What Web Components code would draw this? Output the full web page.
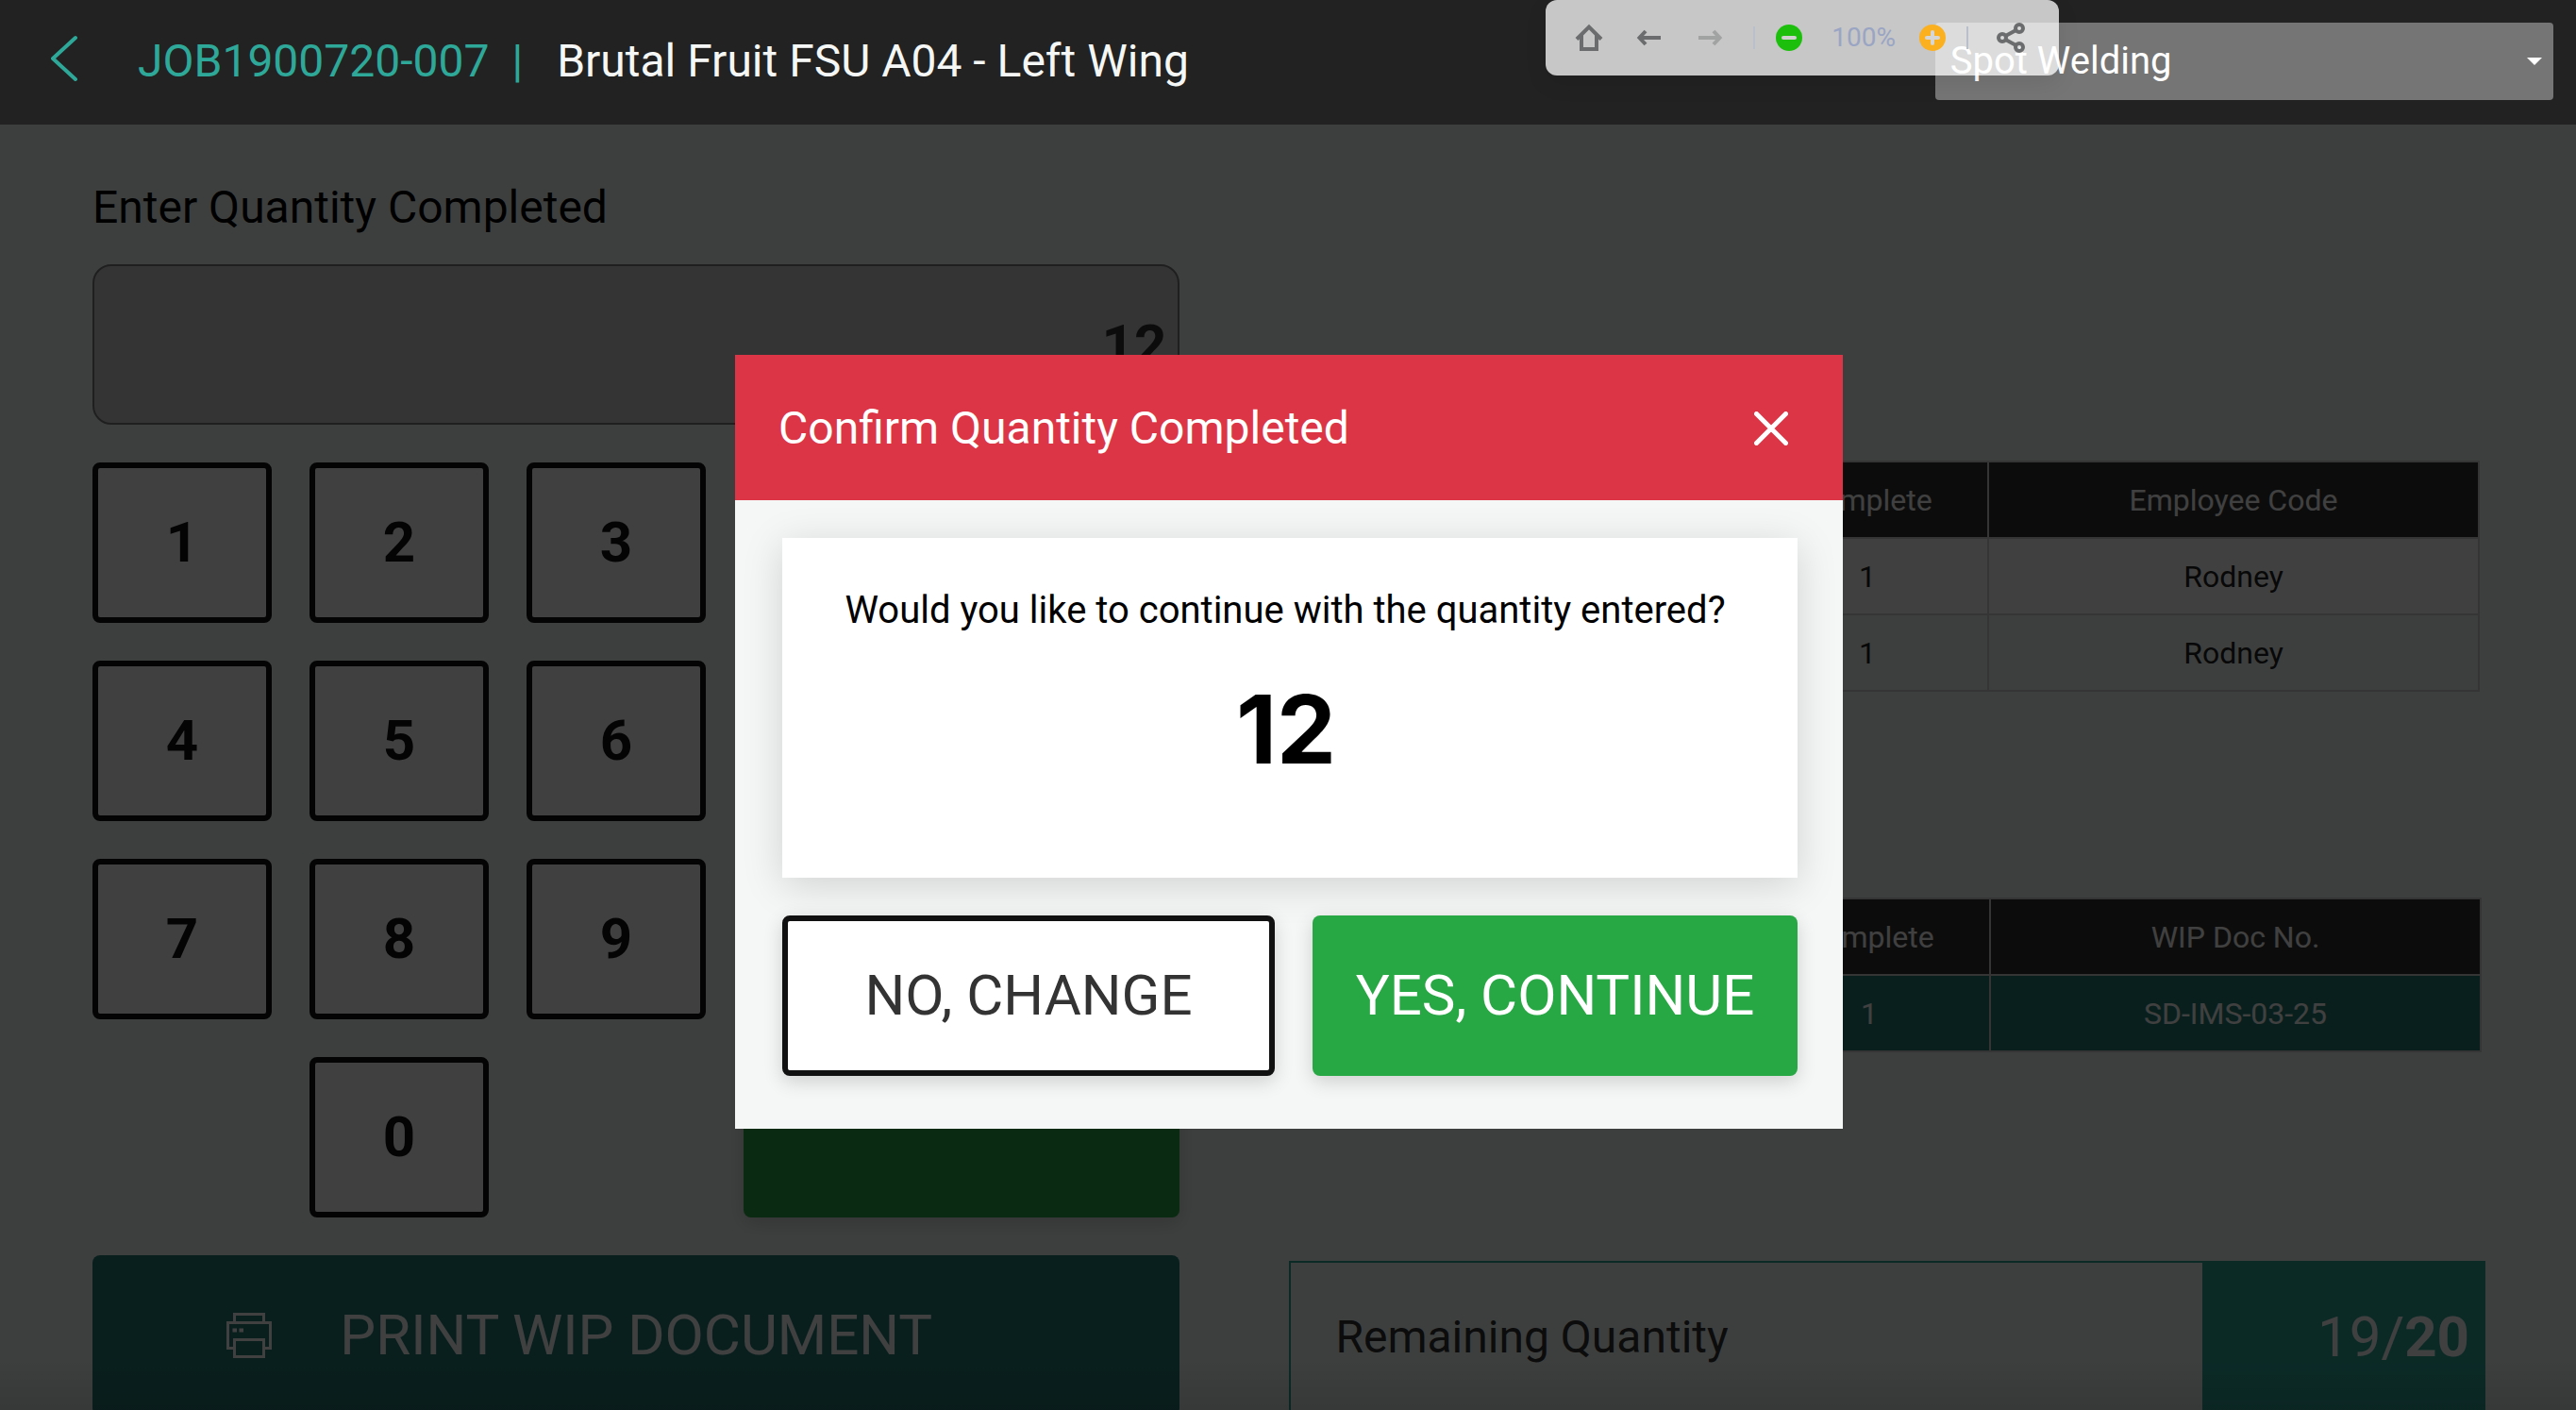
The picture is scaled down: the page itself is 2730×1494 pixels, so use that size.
<!DOCTYPE html>
<html lang="en">
<head>
<meta charset="utf-8">
<title>Quantity Completed</title>
<style>
  html, body { margin: 0; height: 100%; overflow: hidden; }
  body { background: #f4fcf8; color: #000; font-family: Roboto, "Liberation Sans", sans-serif; font-size: 48px; line-height: 56px; }
</style>
</head>
<body>
<wip-app></wip-app>

<script>
const sheet = `
  *, *::before, *::after { box-sizing: border-box; }
  button, input, select { font: inherit; color: inherit; margin: 0; }
  button { cursor: pointer; padding: 0; border: 0; background: none; }
  svg { display: block; }
`;
class Base extends HTMLElement {
  connectedCallback() {
    if (this.shadowRoot) return;
    this.attachShadow({ mode: 'open' }).innerHTML = `<style>${sheet}${this.css()}</style>${this.html()}`;
  }
  css() { return ''; }
  html() { return '<slot></slot>'; }
}

customElements.define('view-toolbar', class extends Base {
  css() { return `
    :host { display: flex; align-items: center; gap: 22px; height: 80px; padding: 0 26px 0 22px; border-radius: 12px;
      background: rgba(255,255,255,.75); box-shadow: 0 8px 24px rgba(0,0,0,.08); color: #6b6c6d; }
    .nav { display: flex; gap: 32px; padding: 0 8px; }
    .zoom { display: flex; align-items: center; gap: 24px; }
    .share { padding: 0 8px; }
    i { width: 2px; height: 24px; background: #b9c0c9; }
    output { min-width: 76px; padding-right: 1px; text-align: right; font-size: 28px; line-height: 32px; color: #9aa5c4; }
    .off { opacity: .4; }
  `; }
  html() { return `
    <div class="nav">
      <button aria-label="Home"><svg width="32" height="32" viewBox="0 0 32 32" fill="none" stroke="currentColor" stroke-width="4"><path d="M3 17.500 16 4.500 29 17.500M8 13v15h16V13"/></svg></button>
      <button aria-label="Back"><svg width="32" height="32" viewBox="0 0 32 32" fill="none" stroke="currentColor" stroke-width="4"><path d="M12 9 5.500 16 12 23M6 16h22"/></svg></button>
      <button class="off" aria-label="Forward"><svg width="32" height="32" viewBox="0 0 32 32" fill="none" stroke="currentColor" stroke-width="4"><path d="M20 9l6.500 7-6.500 7M26 16H4"/></svg></button>
    </div>
    <i></i>
    <div class="zoom">
      <button aria-label="Zoom out"><svg width="28" height="28" viewBox="0 0 28 28"><circle cx="14" cy="14" r="14" fill="#1cc00c"/><path d="M8 14h12" stroke="#d0d0d0" stroke-width="4" stroke-linecap="round"/></svg></button>
      <output>100%</output>
      <button aria-label="Zoom in"><svg width="28" height="28" viewBox="0 0 28 28"><circle cx="14" cy="14" r="14" fill="#fbb01f"/><path d="M8 14h12M14 8v12" stroke="#d6d6d6" stroke-width="4" stroke-linecap="round"/></svg></button>
    </div>
    <i></i>
    <button class="share" aria-label="Share"><svg width="32" height="32" viewBox="0 0 32 32" fill="none" stroke="currentColor" stroke-width="4"><circle cx="6" cy="16" r="4"/><circle cx="24" cy="6" r="4"/><circle cx="24" cy="26" r="4"/><path d="M9.500 14 20.500 8M9.500 18l11 6"/></svg></button>
  `; }
});

customElements.define('app-header', class extends Base {
  css() { return `
    :host { position: relative; z-index: 3; display: flex; align-items: center; height: 132px; padding: 0 24px 2px 54px; background: #222; color: #f5f7f6; }
    a { color: #2ea899; margin-right: 64px; }
    .job { color: #2ea899; }
    .bar { color: #2ea899; margin: 0 36px 0 24px; }
    h1 { margin: 0; font-size: 48px; font-weight: 400; flex: 1; }
    .pick { position: relative; width: 24vw; }
    select { display: block; width: 100%; height: 82px; padding: 0 64px 0 16px; border: 0; border-radius: 4px; appearance: none;
      background: #757575; color: #fff; font-size: 40px; line-height: 48px; }
    .pick svg { position: absolute; right: 12px; top: 37px; pointer-events: none; }
    view-toolbar { position: absolute; left: 60%; top: 0; }
  `; }
  html() { return `
    <a href="#" aria-label="Back"><svg width="28" height="56" viewBox="0 0 28 56" fill="none" stroke="currentColor" stroke-width="4" stroke-linecap="round" stroke-linejoin="round"><path d="M26 3 2 25l24 22"/></svg></a>
    <span class="job">JOB1900720-007</span><span class="bar">|</span>
    <h1>Brutal Fruit FSU A04 - Left Wing</h1>
    <div class="pick">
      <select aria-label="Operation"><option>Spot Welding</option></select>
      <svg width="16" height="8" viewBox="0 0 16 8"><path d="M0 0h16L8 8z" fill="#fff"/></svg>
    </div>
    <view-toolbar></view-toolbar>
  `; }
});

customElements.define('key-button', class extends Base {
  css() { return `
    :host { display: block; height: 170px; }
    button { width: 100%; height: 100%; border: 6px solid #111; border-radius: 8px; background: #fff; color: #111; font-size: 60px; line-height: 72px; font-weight: 700; }
  `; }
  html() { return `<button><slot></slot></button>`; }
});

customElements.define('action-button', class extends Base {
  css() { return `
    :host { display: block; min-height: 170px; --bg: #28a745; --fg: #fff; --edge: 0px; }
    :host([kind=outline]) { --bg: #fff; --fg: #333; --edge: 6px; }
    :host([kind=print]) { --bg: #277e75; }
    button { display: grid; grid-template-columns: 1fr auto 1fr; align-items: center; width: 100%; height: 100%; min-height: inherit;
      border: var(--edge) solid #111; border-radius: 8px; background: var(--bg); color: var(--fg);
      font-size: 60px; line-height: 72px; box-shadow: 0 6px 20px rgba(0,0,0,.16); }
    :host([kind=print]) button { box-shadow: none; }
    .icon { display: flex; justify-content: flex-end; }
    ::slotted(svg) { display: block; margin-right: 72px; }
  `; }
  html() { return `<button aria-label="${this.getAttribute('label') || this.textContent.trim()}"><span class="icon"><slot name="icon"></slot></span><span><slot></slot></span></button>`; }
});

customElements.define('quantity-entry', class extends Base {
  css() { return `
    :host { display: flex; flex-direction: column; }
    label { margin-bottom: 32px; }
    input { width: 100%; height: 170px; padding: 0 12px; border: 2px solid #7c7c7c; border-radius: 20px; background: #cfcfcf;
      color: #333; font-size: 60px; font-weight: 700; text-align: right; outline: 0; }
    .keys { display: grid; grid-template-columns: repeat(3, 190px) 1fr; gap: 40px; margin: 40px 0; }
    .zero { grid-column: 2; }
    .enter { grid-column: 4; grid-row: 3 / 5; }
  `; }
  html() {
    const keys = [1,2,3,4,5,6,7,8,9].map((n, i) => `<key-button style="grid-column:${i % 3 + 1};grid-row:${(i / 3 | 0) + 1}">${n}</key-button>`).join('');
    return `
    <label for="qty">Enter Quantity Completed</label>
    <input id="qty" value="12" inputmode="numeric">
    <div class="keys">${keys}<key-button class="zero">0</key-button><action-button class="enter" label="Enter"></action-button></div>
    <action-button kind="print"><svg slot="icon" width="48" height="48" viewBox="0 0 48 48" fill="none" stroke="currentColor" stroke-width="3"><path d="M8.500 10V1.500h31V10M8 37.500H1.500v-27h45v27H40M8.500 28.500h31v18h-31z"/><path d="M6.500 18.500h4.500M13.500 18.500h4.500" stroke-width="4"/></svg>PRINT WIP DOCUMENT</action-button>
  `; }
});

customElements.define('data-table', class extends Base {
  css() { return `
    :host { display: block; padding-right: 4px; }
    table { width: 100%; table-layout: fixed; border-collapse: collapse; font-size: 32px; line-height: 40px; color: #222; text-align: center; }
    col.c { width: 256px; } col.l { width: 520px; }
    tr { height: 81px; }
    th, td { padding: 0; border: 2px solid #d2d2d2; font-weight: 400; }
    th { background: #333; color: #fff; }
    tbody tr:nth-child(odd) { background: #fff; }
    :host([marked]) tbody tr { background: #277e75; color: #fff; }
  `; }
  html() {
    const cells = (t, s) => '<tr>' + s.split(',').map(c => `<${t}>${c}</${t}>`).join('') + '</tr>';
    return `<table><colgroup><col><col class="c"><col class="l"></colgroup>
      <thead>${cells('th', this.getAttribute('head'))}</thead>
      <tbody>${this.getAttribute('rows').split(';').map(r => cells('td', r)).join('')}</tbody></table>`;
  }
});

customElements.define('remaining-card', class extends Base {
  css() { return `
    :host { display: flex; height: 162px; border: 2px solid #2ea899; color: #333; }
    .name { flex: 1; display: flex; align-items: center; padding-left: 47px; }
    .count { width: 298px; display: flex; align-items: center; justify-content: flex-end; padding-right: 15px; background: #2ea899; color: #fff; font-size: 60px; line-height: 72px; }
  `; }
  html() { return `<div class="name">Remaining Quantity</div><div class="count"><span>19/<b>20</b></span></div>`; }
});

customElements.define('confirm-dialog', class extends Base {
  css() { return `
    :host { position: fixed; inset: 0; z-index: 2; display: flex; justify-content: center; align-items: flex-start; padding: 376px 0 0 2px; background: rgba(0,0,0,.75); }
    section { width: 43vw; background: #f5f7f6; }
    header { display: flex; align-items: center; justify-content: space-between; height: 154px; padding: 2px 58px 0 46px; background: #dc3545; color: #fff; }
    h2 { margin: 0; font-size: 48px; font-weight: 400; }
    .body { padding: 40px 48px 56px 50px; }
    .card { height: 360px; padding: 53px 0 0; background: #fff; text-align: center; box-shadow: 0 8px 40px rgba(0,0,0,.15); }
    p { margin: 0; padding-right: 10px; font-size: 40px; line-height: 48px; }
    .qty { margin-top: 42px; padding-right: 8px; font: 700 100px/120px Inter, Roboto, sans-serif; }
    .row { display: grid; grid-template-columns: 261fr 257fr; gap: 40px; margin-top: 40px; }
  `; }
  html() { return `
    <section role="dialog" aria-modal="true" aria-labelledby="t">
      <header><h2 id="t">Confirm Quantity Completed</h2>
        <button aria-label="Close"><svg width="36" height="36" viewBox="0 0 36 36" stroke="currentColor" stroke-width="5" stroke-linecap="round"><path d="M2.500 2.500l31 31M33.500 2.500l-31 31"/></svg></button></header>
      <div class="body">
        <div class="card"><p>Would you like to continue with the quantity entered?</p><p class="qty">12</p></div>
        <div class="row"><action-button kind="outline">NO, CHANGE</action-button><action-button>YES, CONTINUE</action-button></div>
      </div>
    </section>
  `; }
});

customElements.define('wip-app', class extends Base {
  css() { return `
    :host { display: block; height: 100vh; overflow: hidden; }
    main { display: grid; grid-template-columns: 10fr 11fr; gap: 116px; padding: 60px 96px 0 98px; }
    .side { padding-top: 296px; }
    .first { min-height: 463px; padding-right: 6px; } .second { min-height: 385px; }
    .fade { position: fixed; left: 0; right: 0; bottom: 0; height: 56px; z-index: 1; background: linear-gradient(transparent, rgba(30,30,50,.12)); }
  `; }
  html() { return `
    <app-header></app-header>
    <main>
      <quantity-entry></quantity-entry>
      <div class="side">
        <data-table class="first" head=",Complete,Employee Code" rows=",1,Rodney;,1,Rodney"></data-table>
        <data-table class="second" marked head=",Complete,WIP Doc No." rows=",1,SD-IMS-03-25"></data-table>
        <remaining-card></remaining-card>
      </div>
    </main>
    <div class="fade"></div>
    <confirm-dialog></confirm-dialog>
  `; }
});
</script>
</body>
</html>
